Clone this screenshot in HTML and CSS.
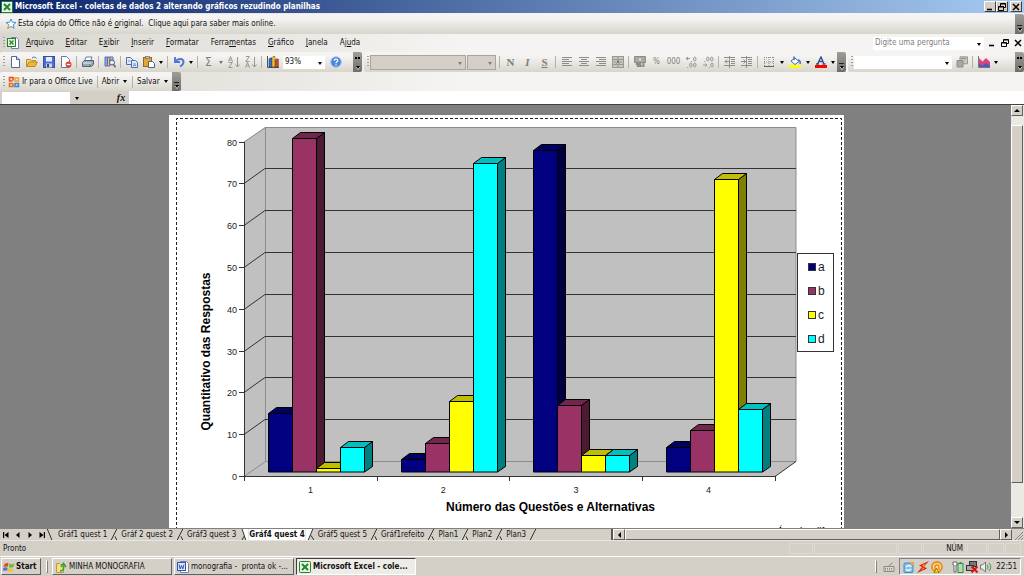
FILE: index.html
```
<!DOCTYPE html>
<html lang="pt-BR">
<head>
<meta charset="utf-8">
<title>Microsoft Excel - coletas de dados 2 alterando gráficos rezudindo planilhas</title>
<link rel="stylesheet" href="styles.css">
</head>
<body>
<svg class="defs" aria-hidden="true">
  <symbol id="excel" viewBox="0 0 12 12"><rect x=".5" y=".5" width="11" height="11" rx="1" fill="#e9f5e4" stroke="#2c7a2c"/><path d="M3 3l6 6M9 3L3 9" stroke="#1f8a2a" stroke-width="2"/></symbol>
  <symbol id="restore" viewBox="0 0 8 8"><path d="M2.500 3V.5h5v4H6M2.500 1h5" fill="none" stroke="#000"/><path d="M.5 3.500h5v4h-5zM.5 4h5" fill="none" stroke="#000"/></symbol>
  <symbol id="close" viewBox="0 0 8 8"><path d="M1 1l6 6M7 1L1 7" stroke="#000" stroke-width="1.500"/></symbol>
  <symbol id="min" viewBox="0 0 8 8"><path d="M1 6.500h5" stroke="#000" stroke-width="1.600"/></symbol>
</svg>

<header class="titlebar">
  <svg class="ic"><use href="#excel"/></svg>
  <h1>Microsoft Excel - coletas de dados 2 alterando gráficos rezudindo planilhas</h1>
  <div class="winbtns">
    <button aria-label="Minimizar"><svg class="ic8"><use href="#min"/></svg></button>
    <button aria-label="Restaurar"><svg class="ic8"><use href="#restore"/></svg></button>
    <button class="apart" aria-label="Fechar"><svg class="ic8"><use href="#close"/></svg></button>
  </div>
</header>

<div class="chrome">
  <div class="bar notice">
    <svg class="ic" viewBox="0 0 12 12"><path d="M6 1l1.400 3.300 3.600.2-2.800 2.200 1 3.600L6 8.400l-3.200 1.900 1-3.600L1 4.500l3.600-.2z" fill="#fff" stroke="#3b9bd8"/><path d="M6 8.400l-3.200 1.900 1-3.600" fill="none" stroke="#f0a030"/></svg>
    <span>Esta cópia do Office não é <u>o</u>riginal.&nbsp; Clique aqui para saber mais online.</span>
    <button class="cap" aria-label="Opções"></button>
  </div>

  <nav class="menubar">
    <i class="grip"></i>
    <svg class="ic menuicon" viewBox="0 0 12 12"><path d="M4.500.5h5l2 2v9h-7z" fill="#fff" stroke="#6b85b5"/><rect x=".5" y="1.500" width="8" height="8" fill="#e4f2e0" stroke="#2c7a2c"/><path d="M2.500 3.500l4 4M6.500 3.500l-4 4" stroke="#1f8a2a" stroke-width="1.300"/></svg>
    <button><u>A</u>rquivo</button><button><u>E</u>ditar</button><button>E<u>x</u>ibir</button><button><u>I</u>nserir</button><button><u>F</u>ormatar</button><button>Ferra<u>m</u>entas</button><button><u>G</u>ráfico</button><button><u>J</u>anela</button><button>Aj<u>u</u>da</button>
    <label class="ask"><input type="text" aria-label="Digite uma pergunta" placeholder="Digite uma pergunta"></label>
    <div class="docbtns">
      <button aria-label="Minimizar pasta"><svg class="ic8"><use href="#min"/></svg></button>
      <button aria-label="Restaurar pasta"><svg class="ic8"><use href="#restore"/></svg></button>
      <button aria-label="Fechar pasta"><svg class="ic8"><use href="#close"/></svg></button>
    </div>
  </nav>

  <div class="toolrow">
    <div class="bar tools">
      <i class="grip"></i>
      <button class="tb" aria-label="Novo"><svg class="ic" viewBox="0 0 12 12"><path d="M2.500.5h5l3 3v8h-8z" fill="#fff" stroke="#4a6a9c"/><path d="M7.500.5v3h3" fill="#cfdcf0" stroke="#4a6a9c"/></svg></button>
      <button class="tb" aria-label="Abrir arquivo"><svg class="ic" viewBox="0 0 12 12"><path d="M.5 10.500v-7h4l1 1h4v2" fill="#f7d678" stroke="#b98a20"/><path d="M.5 10.500l2.500-4.500h8.500l-2.500 4.500z" fill="#f2b83a" stroke="#b98a20"/><path d="M6 2c2-1.500 3.500-1 4.500.5" fill="none" stroke="#4a6a9c"/></svg></button>
      <button class="tb" aria-label="Salvar arquivo"><svg class="ic" viewBox="0 0 12 12"><rect x=".5" y=".5" width="11" height="11" fill="#4f6fd0" stroke="#3a4ea8"/><rect x="3" y="1" width="6" height="4.500" fill="#e8eefc"/><rect x="3" y="7.500" width="6" height="4" fill="#c9d4ee"/><rect x="4" y="8" width="2" height="3" fill="#33468c"/></svg></button>
      <button class="tb" aria-label="Permissão"><svg class="ic" viewBox="0 0 12 12"><path d="M1.500.5h5l3 3v8h-8z" fill="#fff" stroke="#6a7a9c"/><circle cx="8.500" cy="8.500" r="3" fill="#d8452c"/><path d="M6.700 8.500h3.600" stroke="#fff" stroke-width="1.300"/></svg></button>
      <i class="sep"></i>
      <button class="tb" aria-label="Imprimir"><svg class="ic" viewBox="0 0 12 12"><path d="M4 1h6L8.500 5h-6z" fill="#fff" stroke="#6a7a9c"/><path d="M.5 6.500l2-2h9v4l-2 2h-9z" fill="#9aa6bb" stroke="#56627a"/><path d="M1 7h8" stroke="#e8ecf4"/><path d="M7 9h2" stroke="#3fae3f" stroke-width="1.500"/></svg></button>
      <i class="sep"></i>
      <button class="tb" aria-label="Pesquisar"><svg class="ic" viewBox="0 0 12 12"><path d="M1 1h2.500v9H1z" fill="#8fa7dd" stroke="#5a70b0"/><path d="M3.500 1H6v9H3.500z" fill="#f0bd6a" stroke="#5a70b0"/><path d="M6 1h3v5H6z" fill="#a9bde8" stroke="#5a70b0"/><circle cx="8" cy="6.500" r="2.500" fill="#dff0ff" stroke="#556"/><path d="M9.600 8.600l2 2.800" stroke="#556" stroke-width="1.400"/></svg></button>
      <i class="sep"></i>
      <button class="tb" aria-label="Copiar"><svg class="ic" viewBox="0 0 12 12"><path d="M.5 1.500h4l2 2v5h-6z" fill="#dfe9fb" stroke="#4a6fb5"/><path d="M5.500 4.500h4l2 2v5h-6z" fill="#dfe9fb" stroke="#4a6fb5"/><path d="M7 8h3M7 9.500h3M2 5h2.500" stroke="#4a6fb5" stroke-width=".7"/></svg></button>
      <button class="tb" aria-label="Colar"><svg class="ic" viewBox="0 0 12 12"><rect x=".5" y="1.500" width="8" height="9" fill="#e3a534" stroke="#96681a"/><rect x="2.500" y=".5" width="4" height="2" fill="#c5c9d3" stroke="#6a6a6a" stroke-width=".7"/><path d="M5.500 5.500h4l2 2v4h-6z" fill="#fff" stroke="#55617a"/></svg></button><button class="dd" aria-label="Opções de colar"></button>
      <i class="sep"></i>
      <button class="tb" aria-label="Desfazer"><svg class="ic" viewBox="0 0 12 12"><path d="M2 1v5h5M2.500 5.500C5 1.800 10.500 2.500 10.500 6 10.500 8.500 9 9.500 7 10.500" fill="none" stroke="#4a7ad8" stroke-width="1.900"/></svg></button><button class="dd" aria-label="Lista desfazer"></button>
      <i class="sep"></i>
      <button class="tb off sum" aria-label="AutoSoma">Σ</button><button class="dd off" aria-label="Funções"></button>
      <button class="tb" aria-label="Crescente"><svg class="ic" viewBox="0 0 12 12" fill="none" stroke="#9a9893"><path d="M.5 5.500l2-5 2 5M1.300 4h2.500M.8 6.500h3.500l-3.500 5h3.700M9.500 1v9.500M7.500 8.500l2 2.500 2-2.500"/></svg></button>
      <button class="tb" aria-label="Decrescente"><svg class="ic" viewBox="0 0 12 12" fill="none" stroke="#9a9893"><path d="M.8.5h3.500l-3.500 5h3.700M.5 11.500l2-5 2 5M1.300 10h2.500M9.500 1v9.500M7.500 8.500l2 2.500 2-2.500"/></svg></button>
      <i class="sep"></i>
      <button class="tb" aria-label="Assistente de gráfico"><svg class="ic" viewBox="0 0 12 12"><path d="M.5 0v11.500H12" stroke="#555" fill="none"/><path d="M2 3l1-1h2v9H2z" fill="#3b6ed0" stroke="#234" stroke-width=".5"/><path d="M5 1.500l1-1h2V11H5z" fill="#f2c230" stroke="#543" stroke-width=".5"/><path d="M8.300 4l1-1h2v8h-3z" fill="#d8452c" stroke="#422" stroke-width=".5"/></svg></button>
      <span class="combo zoom"><select aria-label="Zoom"><option>93%</option></select></span>
      <button class="tb" aria-label="Ajuda do Excel"><svg class="ic" viewBox="0 0 12 12"><circle cx="6" cy="6" r="5.300" fill="#4a86dc" stroke="#a9c6ee"/><path d="M4.200 4.800C4.200 2.500 7.800 2.600 7.800 4.600 7.800 5.800 6 5.800 6 7.200M6 8.300v1.200" fill="none" stroke="#fff" stroke-width="1.300"/></svg></button>
      <button class="cap more" aria-label="Mais botões"></button>
    </div>

    <div class="bar tools">
      <i class="grip"></i>
      <span class="combo gray font"><select aria-label="Fonte" disabled><option></option></select></span>
      <span class="combo gray size"><select aria-label="Tamanho" disabled><option></option></select></span>
      <i class="sep"></i>
      <button class="tb off serif"><b>N</b></button>
      <button class="tb off serif"><b><i>I</i></b></button>
      <button class="tb off serif"><b><u>S</u></b></button>
      <i class="sep"></i>
      <button class="tb" aria-label="Esquerda"><svg class="ic" viewBox="0 0 12 12" stroke="#8f8d88"><path d="M1 1.500h10M1 3.500h7M1 5.500h10M1 7.500h7M1 9.500h10"/></svg></button>
      <button class="tb" aria-label="Centro"><svg class="ic" viewBox="0 0 12 12" stroke="#8f8d88"><path d="M1 1.500h10M3 3.500h6M1 5.500h10M3 7.500h6M1 9.500h10"/></svg></button>
      <button class="tb" aria-label="Direita"><svg class="ic" viewBox="0 0 12 12" stroke="#8f8d88"><path d="M1 1.500h10M4 3.500h7M1 5.500h10M4 7.500h7M1 9.500h10"/></svg></button>
      <button class="tb" aria-label="Mesclar"><svg class="ic" viewBox="0 0 12 12"><rect x=".5" y=".5" width="11" height="11" fill="#c9c6be" stroke="#9a9893"/><path d="M.5 3.500h11M.5 8.500h11M6 .5v3M6 8.500v3M1.500 6h2.500M8 6h2.500" stroke="#9a9893"/><path d="M4.800 7.500L6 4.500l1.200 3" fill="none" stroke="#66645f"/></svg></button>
      <i class="sep"></i>
      <button class="tb" aria-label="Moeda"><svg class="ic" viewBox="0 0 12 12"><path d="M.5.5h11v6H.5z" fill="#aaa8a2" stroke="#8f8d88"/><circle cx="6" cy="3.500" r="1.300" fill="#ddd"/><path d="M2 7.500h5v1H2zM3 9.500h5v1H3z" fill="#bbb" stroke="#8f8d88"/><path d="M9.500 7v4" stroke="#8f8d88" stroke-width="2"/></svg></button>
      <button class="tb off">%</button>
      <button class="tb off">000</button>
      <button class="tb" aria-label="Aumentar casas"><svg class="ic" viewBox="0 0 12 12" fill="none" stroke="#9a9893"><path d="M1 2.500h4M3 1L1 2.500 3 4M7 5l-.7 1M3 11l-.7 1"/><ellipse cx="9.800" cy="3" rx="1.200" ry="2"/><ellipse cx="5.800" cy="9" rx="1.200" ry="2"/><ellipse cx="9.800" cy="9" rx="1.200" ry="2"/></svg></button>
      <button class="tb" aria-label="Diminuir casas"><svg class="ic" viewBox="0 0 12 12" fill="none" stroke="#9a9893"><path d="M1 9h4M3.500 7.500L5 9 3.500 10.500M3 5l-.7 1M7.500 11l-.7 1"/><ellipse cx="5.800" cy="3" rx="1.200" ry="2"/><ellipse cx="9.800" cy="3" rx="1.200" ry="2"/><ellipse cx="10" cy="9" rx="1.200" ry="2"/></svg></button>
      <i class="sep"></i>
      <button class="tb" aria-label="Diminuir recuo"><svg class="ic" viewBox="0 0 12 12" fill="none" stroke="#8f8d88"><path d="M0 1.500h11M7 3.500h4M7 5.500h4M7 7.500h4M0 9.500h11M6 5.500H1M3 3.500l-2 2 2 2M5.500 0v12"/></svg></button>
      <button class="tb" aria-label="Aumentar recuo"><svg class="ic" viewBox="0 0 12 12" fill="none" stroke="#8f8d88"><path d="M0 1.500h11M7 3.500h4M7 5.500h4M7 7.500h4M0 9.500h11M0 5.500h5M2.500 3.500l2 2-2 2M5.500 0v12"/></svg></button>
      <i class="sep"></i>
      <button class="tb" aria-label="Bordas"><svg class="ic" viewBox="0 0 12 12" fill="none" stroke="#8f8d88"><path d="M1.500 1v9M6 1v9M10.500 1v9M1 1.500h10M1 6h10" stroke-dasharray="1 1"/><path d="M1 10.500h10" stroke="#66645f"/></svg></button><button class="dd wide" aria-label="Tipos de borda"></button>
      <button class="tb" aria-label="Cor de preenchimento"><svg class="ic" viewBox="0 0 12 12"><path d="M2 5l4-3 4 3.500L6 8.500z" fill="#fff" stroke="#4468a8"/><path d="M5 4V.5M9 4c2 0 2.500 2 2 4" fill="none" stroke="#3b6ed0" stroke-width="1.500"/><rect y="9" width="12" height="3" fill="#ff0"/></svg></button><button class="dd wide" aria-label="Cores de preenchimento"></button>
      <button class="tb" aria-label="Cor da fonte"><svg class="ic" viewBox="0 0 12 12"><path d="M2.500 8l3.500-7 3 7M4 5.500h4M1 8h3M7.500 8h3" fill="none" stroke="#33508c" stroke-width="1.400"/><rect y="9" width="12" height="3" fill="#f00"/></svg></button><button class="dd" aria-label="Cores da fonte"></button>
      <button class="cap" aria-label="Mais botões de formatação"></button>
    </div>

    <div class="bar tools">
      <i class="grip"></i>
      <span class="combo object"><select aria-label="Objetos do gráfico"><option></option></select></span>
      <button class="tb" aria-label="Formatar objeto"><svg class="ic" viewBox="0 0 12 12"><path d="M4 .8h7.500v7H4z" fill="#c9c6be" stroke="#9a9893"/><path d="M1 4.500h6v6.500H1z" fill="#aaa8a2" stroke="#8f8d88"/><path d="M5 2.500h5" stroke="#8f8d88"/></svg></button>
      <i class="sep"></i>
      <button class="tb" aria-label="Tipo de gráfico"><svg class="ic" viewBox="0 0 12 12"><path d="M.5 0v11.500H12" fill="none" stroke="#777"/><path d="M1 11V2l3.500 3.500L8 2l4 4v5z" fill="#e0407c"/><path d="M1 11V8l3.500 2L8 7l4 3v1z" fill="#3b5ed0"/></svg></button><button class="dd" aria-label="Tipos de gráfico"></button>
      <button class="cap more" aria-label="Mais botões de gráfico"></button>
    </div>
  </div>

  <div class="bar live">
    <i class="grip"></i>
    <button class="txt"><svg class="ic" viewBox="0 0 12 12" fill="none" stroke-width="1.600"><path d="M5 4.500V1.500H1.500V5H4.500" stroke="#e8501e"/><rect x="7" y="2" width="3.500" height="3" stroke="#f2a52a"/><path d="M5 7.500v3H1.500v-3H5" stroke="#e0702c"/><rect x="7" y="7.500" width="3.500" height="3" stroke="#3b8ed0"/></svg>Ir para o Office Live</button>
    <i class="sep"></i>
    <button class="txt">Abrir<i class="tri"></i></button>
    <i class="sep"></i>
    <button class="txt">Salvar<i class="tri"></i></button>
    <button class="cap" aria-label="Mais opções"></button>
  </div>

  <div class="formula">
    <input class="name" type="text" aria-label="Caixa de nome">
    <button class="dd" aria-label="Nomes"></button>
    <button class="fx">fx</button>
    <input class="expr" type="text" aria-label="Barra de fórmulas">
  </div>
</div>

<main class="work">
  <div class="canvas">
    <div class="sheet">
      <svg id="chart" class="chart" viewBox="169 115 675 430" role="img" aria-label="Gráfico de colunas das respostas"></svg>
    </div>
  </div>
  <div class="vscroll">
    <button class="sb" aria-label="Acima"><i class="up"></i></button>
    <div class="vtrack"><div class="vthumb"></div></div>
    <button class="sb" aria-label="Abaixo"><i class="down"></i></button>
  </div>
</main>

<div class="tabrow">
  <div class="tabnav">
    <button aria-label="Primeira"><svg class="ic8" viewBox="0 0 8 8"><path d="M1 1h1.200v6H1zM6.500 1v6L2.500 4z"/></svg></button>
    <button aria-label="Anterior"><svg class="ic8" viewBox="0 0 8 8"><path d="M5.500 1v6L2 4z"/></svg></button>
    <button aria-label="Próxima"><svg class="ic8" viewBox="0 0 8 8"><path d="M2.500 1v6L6 4z"/></svg></button>
    <button aria-label="Última"><svg class="ic8" viewBox="0 0 8 8"><path d="M5.800 1H7v6H5.800zM1.500 1v6l4-3z"/></svg></button>
  </div>
  <svg class="cut" viewBox="0 0 12 12"><path d="M2 0l5 12"/></svg>
  <button class="tab">Gráf1 quest 1</button>
  <svg class="cut" viewBox="0 0 12 12"><path d="M3 12L9 0M7 8l2 4"/></svg>
  <button class="tab">Gráf 2 quest 2</button>
  <svg class="cut" viewBox="0 0 12 12"><path d="M3 12L9 0M7 8l2 4"/></svg>
  <button class="tab">Gráf3 quest 3</button>
  <svg class="cut" viewBox="0 0 12 12"><path class="fill" d="M5 0h7v12H9z"/><path d="M5 0l4 12M5 12l2-4"/></svg>
  <button class="tab active">Gráf4 quest 4</button>
  <svg class="cut" viewBox="0 0 12 12"><path class="fill" d="M0 0h8L3 12H0z"/><path d="M3 12L8 0M6 7l3 5"/></svg>
  <button class="tab">Gráf5 quest 5</button>
  <svg class="cut" viewBox="0 0 12 12"><path d="M3 12L9 0M7 8l2 4"/></svg>
  <button class="tab">Gráf1refeito</button>
  <svg class="cut" viewBox="0 0 12 12"><path d="M3 12L9 0M7 8l2 4"/></svg>
  <button class="tab">Plan1</button>
  <svg class="cut" viewBox="0 0 12 12"><path d="M3 12L9 0M7 8l2 4"/></svg>
  <button class="tab">Plan2</button>
  <svg class="cut" viewBox="0 0 12 12"><path d="M3 12L9 0M7 8l2 4"/></svg>
  <button class="tab">Plan3</button>
  <svg class="cut" viewBox="0 0 12 12"><path d="M3 12L9 0"/></svg>
  <div class="hscroll">
    <button class="sb" aria-label="Esquerda"><i class="left"></i></button>
    <div class="hthumb"></div>
    <button class="sb" aria-label="Direita"><i class="right"></i></button>
  </div>
  <svg class="size-grip" viewBox="0 0 12 12"><path d="M3 11l8-8M6 11l5-5M9 11l2-2" stroke="#8c8a84"/></svg>
</div>

<footer class="status">
  <span class="ready">Pronto</span>
  <span class="cell w25"></span><span class="cell w83"></span><span class="cell w25"></span><span class="cell num">NÚM</span><span class="cell w20"></span><span class="cell w16"></span><span class="cell w16"></span>
</footer>

<div class="taskbar">
  <button class="task start"><svg class="ic" viewBox="0 0 12 12"><path d="M1 4c1-2 3-2.500 4.500-1.500L4.700 6C3.500 5.200 2 5.200.5 6z" fill="#e8501e"/><path d="M6.500 2.500C8 3.500 10 3.500 11.500 2L10.500 6C9 7 7 7 5.700 6z" fill="#6fb83f"/><path d="M.3 7C2 6 3.500 6 4.600 7L4 10C2.500 9.300 1 9.500 0 10z" fill="#3b7ed8"/><path d="M5.500 7c1.500 1 3 1 4.800.2L9.500 10.500C8 11.500 6 11 4.700 10.300z" fill="#f2c230"/></svg>Start</button>
  <i class="tgrip"></i>
  <button class="task"><svg class="ic" viewBox="0 0 12 12"><path d="M1.500 11.500v-9h3l1 1h3v8z" fill="#f5dd80" stroke="#c09a30"/><path d="M5 10c3 0 4-2 3.500-5M6 6l2.500-3.500L11 6" fill="none" stroke="#37a137" stroke-width="1.600"/></svg><span>MINHA MONOGRAFIA</span></button>
  <button class="task"><svg class="ic" viewBox="0 0 12 12"><path d="M3.500.5h6l2 2v9h-8z" fill="#fff" stroke="#6b85b5"/><rect x=".5" y="1.500" width="8" height="8" fill="#dce6f8" stroke="#2f55b0"/><path d="M2 3.500L3.200 8 4.500 4.500 5.800 8 7 3.500" fill="none" stroke="#2f55b0"/></svg><span>monografia -&nbsp; pronta ok -...</span></button>
  <button class="task on"><svg class="ic"><use href="#excel"/></svg><span>Microsoft Excel - cole...</span></button>
  <i class="tgrip right-edge"></i>
  <svg class="ic kbd" viewBox="0 0 12 12"><path d="M1 5.500h10v5H1z" fill="#d8d5cd" stroke="#8c8a84"/><path d="M2 7.500h8M2 9h8" stroke="#8c8a84" stroke-dasharray="1 1"/><path d="M6 5.500c0-3 3-1 3-4" fill="none" stroke="#8c8a84"/></svg>
  <div class="tray">
    <svg class="ic" viewBox="0 0 12 12"><rect x="1" y="2" width="9" height="9.500" rx="1" fill="#7fc0ee" stroke="#3b8ed0"/><path d="M3 6c2-2 4-2 5 0M8 8c-2 2-4 2-5 0" fill="none" stroke="#fff" stroke-width="1.300"/><path d="M7 1h4v3H8z" fill="#f2a52a"/></svg>
    <svg class="ic" viewBox="0 0 12 12"><path d="M12 0L2 4.500 5 6 0 12 10 7.500 7 5.500z" fill="#e02010"/><path d="M9 2.500L5 4.500 7 6 3.500 9.500 7 7.500 6 5.500z" fill="#f8c820"/></svg>
    <svg class="ic" viewBox="0 0 12 12"><circle cx="6" cy="6" r="5" fill="#fbe0a8" stroke="#ee8a1a" stroke-width="1.800"/><path d="M4 9V6c0-3 4-3 4 0v3" fill="none" stroke="#ee8a1a" stroke-width="1.500"/><path d="M3 12l2.500-5L8 12z" fill="#ffd800" stroke="#554400" stroke-width=".6"/></svg>
    <svg class="ic gap" viewBox="0 0 12 12"><path d="M1 1h4v3H4v7H2V4H1z" fill="#fff" stroke="#666"/><rect x="6" y="2.500" width="5" height="9" fill="#a9e2b0" stroke="#3c8a48"/><rect x="7.500" y="1" width="2" height="1.500" fill="#3c8a48"/></svg>
    <svg class="ic" viewBox="0 0 12 12"><rect x="3.500" y=".5" width="7" height="5" fill="#777" stroke="#333"/><rect x=".5" y="4.500" width="7" height="5" fill="#aaa" stroke="#333"/><path d="M5.500 5.500l6 6M11.500 5.500l-6 6" stroke="#e01010" stroke-width="2"/></svg>
    <svg class="ic" viewBox="0 0 12 12"><path d="M.5 4h2l3-3v10l-3-3h-2z" fill="#eee" stroke="#777"/><path d="M7 3.500c1.300 1.500 1.300 3.500 0 5M9 2c2.300 2.500 2.300 5.500 0 8" fill="none" stroke="#3c9a58"/></svg>
    <time>22:51</time>
  </div>
</div>
<script src="chart.js"></script>
</body>
</html>
```
FILE: styles.css
```
* { box-sizing: border-box; }
html, body { height: 100%; margin: 0; }
body {
  display: flex;
  flex-direction: column;
  overflow: hidden;
  background: #d4d0c8;
  color: #111;
  font: 8px/12px "DejaVu Sans Condensed", "DejaVu Sans", sans-serif;
}
button, input, select {
  margin: 0;
  padding: 0;
  border: 0;
  border-radius: 0;
  background: none;
  color: inherit;
  font: inherit;
}
button { white-space: nowrap; }
.defs { display: none; }
.ic { display: block; flex: none; width: 12px; height: 12px; }
.ic8 { display: block; flex: none; width: 8px; height: 8px; }

.titlebar {
  display: flex;
  flex: none;
  align-items: center;
  gap: 2px;
  height: 13px;
  padding: 0 2px 0 1px;
  background: linear-gradient(90deg, #0a246a, #a6caf0);
  color: #fff;
}
.titlebar h1 { flex: 1; margin: 0; font-size: 8px; line-height: 13px; white-space: nowrap; }
.winbtns { display: flex; }
.winbtns button {
  display: grid;
  place-items: center;
  width: 12px;
  height: 11px;
  background: #d4d0c8;
  border: 1px solid;
  border-color: #fff #404040 #404040 #fff;
}
.winbtns .apart { margin-left: 2px; }

.chrome { flex: none; background: linear-gradient(90deg, #d9d6cf, #f5f4f2 45%); }
.bar {
  display: flex;
  align-items: center;
  height: 19px;
  background: linear-gradient(#f5f4f2 20%, #d8d5cc);
  border-radius: 2px;
}
.notice { margin-top: 1px; gap: 1px; padding-left: 5px; height: 20px; }
.grip {
  flex: none;
  width: 2px;
  height: 12px;
  margin: 0 2px 0 3px;
  background: repeating-linear-gradient(#a19e95 0 1px, transparent 1px 3px);
}
.cap {
  position: relative;
  align-self: stretch;
  width: 9px;
  margin-left: auto;
  border-radius: 0 2px 2px 0;
  background: linear-gradient(#a09e99, #6f6d69);
}
.cap::after, .dd::after, .tri {
  content: "";
  display: block;
  width: 0;
  margin: 0 auto;
  border: 2px solid transparent;
  border-top: 3px solid #000;
  border-bottom: 0;
}
.cap::after {
  position: absolute;
  right: 2px;
  bottom: 3px;
  filter: drop-shadow(0 1px 0 #fff);
}
.cap::before {
  content: "";
  position: absolute;
  right: 2px;
  bottom: 8px;
  width: 5px;
  height: 1px;
  background: #222;
}
.cap.more::before {
  bottom: 13px;
  height: 2px;
  background: repeating-linear-gradient(90deg, #000 0 2px, #888 2px 3px);
}

.menubar { display: flex; align-items: center; height: 18px; }
.menubar > button { margin-right: 12px; }
.menuicon { margin-right: 7px; }
.ask {
  position: relative;
  display: flex;
  width: 111px;
  height: 13px;
  margin-left: auto;
  background: #fff;
}
.ask input { width: 90px; padding-left: 2px; }
.ask input::placeholder { color: #808080; opacity: 1; }
.ask::after, .combo::after {
  content: "";
  position: absolute;
  top: 50%;
  right: 3px;
  border: 2px solid transparent;
  border-top: 3px solid #000;
  border-bottom: 0;
}
.docbtns { display: flex; gap: 5px; padding: 0 2px 0 4px; }

.toolrow { display: grid; grid-template-columns: 362fr 482fr 176fr; gap: 2px; }
.tools { min-width: 0; height: 20px; }
.tools > .grip { margin: 0 1px 0 3px; }
.tb {
  display: grid;
  flex: none;
  place-items: center;
  width: 17px;
  height: 16px;
}
.off { color: #807e79; }
.sum { font-size: 12px; }
.serif { font: 11px/12px "Liberation Serif", serif; }
.dd { flex: none; width: 8px; height: 12px; }
.dd.wide { width: 9px; }
.dd.off { opacity: .5; }
.dd::after { margin-top: 1px; }
.sep { flex: none; width: 1px; height: 12px; margin: 0 2px; background: #b5b2a9; }
.combo { position: relative; flex: none; height: 13px; background: #fff; }
.combo select { appearance: none; display: block; width: 100%; height: 100%; padding-left: 2px; }
.combo.gray { height: 15px; margin-right: 1px; background: #d4d0c8; border: 1px solid #a8a59e; }
.combo.gray::after { opacity: .4; }
.zoom { width: 42px; margin: 0 2px; }
.font { width: 96px; }
.size { width: 29px; }
.object { width: 98px; margin-right: 1px; }

.live { width: max-content; }
.live .txt { display: flex; align-items: center; gap: 3px; margin: 0 2px; }
.live .txt:first-of-type { gap: 2px; margin-left: 1px; }
.live .cap { margin-left: 1px; }
.live .tri { margin: 0 1px; }

.formula { display: flex; align-items: center; height: 13px; background: #d4d0c8; }
.name { width: 68px; height: 12px; margin-left: 2px; background: #fff; }
.formula .dd { margin: 0 0 0 3px; }
.fx { width: 12px; margin: 0 2px 0 34px; font: italic bold 10px/12px "Liberation Serif", serif; }
.expr { flex: 1; height: 13px; background: #fff; }

.work { display: flex; flex: 1; min-height: 0; border-top: 1px solid #404040; }
.canvas {
  display: flex;
  flex: 1;
  justify-content: center;
  min-width: 0;
  padding: 10px 0 0 2px;
  overflow: hidden;
  background: #808080;
}
.sheet { flex: none; align-self: flex-start; background: #fff; }
.chart { display: block; width: 675px; height: 430px; font-family: "Liberation Sans", Arial, sans-serif; }
.tick { font-size: 9px; }
.title { font-size: 12px; font-weight: bold; }
.key { font-size: 12px; }
.note { font-size: 10px; }

.vscroll { display: flex; flex-direction: column; width: 13px; background: #ebe9e4; }
.sb, .vthumb, .hthumb {
  flex: none;
  background: #d4d0c8;
  border: 1px solid;
  border-color: #fff #606060 #606060 #fff;
}
.sb { display: grid; place-items: center; width: 12px; height: 11px; }
.vtrack { display: flex; flex: 1; flex-direction: column; padding: 9px 0 34px; }
.vthumb { flex: 1; width: 12px; }
.up, .down, .left, .right { border: 3px solid transparent; }
.up { border-top: 0; border-bottom-color: #000; }
.down { border-bottom: 0; border-top-color: #000; }
.left { border-left: 0; border-right-color: #000; }
.right { border-right: 0; border-left-color: #000; }

.tabrow { display: flex; flex: none; height: 12px; border-top: 1px solid #808080; }
.tabnav { display: flex; width: 45px; padding-left: 2px; gap: 4px; align-items: center; }
.cut { flex: none; width: 12px; height: 11px; fill: none; stroke: #222; }
.cut .fill { fill: #fff; stroke: none; }
.tab { padding: 0 1px; line-height: 11px; }
.tab.active { background: #fff; font-weight: bold; padding: 0; }
.hscroll {
  display: flex;
  width: 401px;
  margin-left: auto;
  border-left: 2px solid #555;
}
.hthumb { flex: 1; }
.size-grip { width: 12px; height: 12px; }

.status {
  display: flex;
  flex: none;
  align-items: center;
  height: 16px;
  padding: 0 3px;
  gap: 1px;
  border-top: 1px solid #e8e6e0;
}
.ready { flex: 1; }
.cell { height: 11px; line-height: 10px; text-align: right; border: 1px solid #dddad3; }
.w16 { width: 16px; }
.w20 { width: 20px; }
.w25 { width: 24px; }
.w83 { width: 83px; }
.num { width: 43px; padding-right: 2px; }

.taskbar {
  display: flex;
  flex: none;
  align-items: center;
  height: 20px;
  padding: 0 3px 0 1px;
  gap: 2px;
  border-top: 1px solid #fff;
}
.task {
  display: flex;
  align-items: center;
  gap: 2px;
  width: 120px;
  height: 17px;
  padding: 0 2px;
  border: 1px solid;
  border-color: #fff #606060 #606060 #fff;
}
.task.start { width: 40px; gap: 1px; padding: 0 1px; font-weight: bold; }
.task.on { background: #eeece7; border-color: #404040 #fff #fff #404040; font-weight: bold; }
.tgrip { width: 2px; height: 13px; margin: 0 2px 0 3px; border: 1px solid; border-color: #fff #808080 #808080 #fff; }
.right-edge { margin: 0 4px 0 auto; }
.kbd { margin-right: 2px; }
.tray {
  display: flex;
  align-items: center;
  gap: 2px;
  height: 17px;
  padding: 0 3px;
  border: 1px solid;
  border-color: #808080 #fff #fff #808080;
}
.tray .gap { margin-left: 7px; }
.tray time { margin-left: 2px; }
```
FILE: chart.js
```
const NS = 'http://www.w3.org/2000/svg';
const chart = document.getElementById('chart');

const add = (tag, attrs, text) => {
  const el = document.createElementNS(NS, tag);
  for (const k in attrs) el.setAttribute(k, attrs[k]);
  if (text) el.textContent = text;
  chart.appendChild(el);
};

const series = [
  { name: 'a', front: '#000080', top: '#000060', side: '#000040' },
  { name: 'b', front: '#993366', top: '#73264d', side: '#4d1a33' },
  { name: 'c', front: '#ffff00', top: '#bfbf00', side: '#808000' },
  { name: 'd', front: '#00ffff', top: '#00bfbf', side: '#008080' }
];
const data = [[14, 80, 1, 6], [3, 7, 17, 74], [77, 16, 4, 4], [6, 10, 70, 15]];
const unit = 4.18;
const left = 244, right = 775, floor = 476.5, wall = 461.5;

// page margin, walls and floor
add('path', { d: 'M176.5 545V118.5H841.5V545', fill: 'none', stroke: '#222', 'stroke-dasharray': '3 2' });
add('path', { d: `M${left} 142L265 127H796V${wall}L${right} ${floor}H${left}Z`, fill: '#c0c0c0' });
add('path', { d: `M${left} 142L265.5 127.5H796V${wall}M265.5 127V${wall}M${left} ${floor}L265.5 ${wall}H796`, fill: 'none', stroke: '#8c8c8c' });
add('path', { d: `M${left + .5} 142V481M${left} ${floor}H${right}L796 ${wall}`, fill: 'none', stroke: '#333' });

// scale
for (let v = 0; v <= 80; v += 10) {
  const y = Math.round(476 - v * unit) + .5;
  const back = Math.round(461 - v * unit) + .5;
  add('path', { d: `M239 ${y}H244`, stroke: '#333' });
  if (v > 0 && v < 80) add('path', { d: `M244 ${y}L265 ${back}H796`, fill: 'none', stroke: '#333' });
  add('text', { x: 237, y: y + 3, 'text-anchor': 'end', class: 'tick', fill: '#222' }, String(v));
}

// columns
data.forEach((group, g) => {
  const tick = Math.round(left + (g + 1) * 132.7) + .5;
  add('path', { d: `M${tick} 476V481`, stroke: '#333' });
  add('text', { x: left + 66.5 + g * 132.7, y: 493, 'text-anchor': 'middle', class: 'tick', fill: '#222' }, String(g + 1));
  group.forEach((v, i) => {
    const x = Math.round(268 + g * 132.7) + i * 24 + .5;
    const y = Math.round(472 - v * unit) + .5;
    const s = series[i];
    const line = { stroke: '#000', 'stroke-linejoin': 'round' };
    add('path', { d: `M${x + 24} ${y}l8 -6V466.5L${x + 24} 472Z`, fill: s.side, ...line });
    add('path', { d: `M${x} ${y}l8 -6h24l-8 6Z`, fill: s.top, ...line });
    add('path', { d: `M${x} ${y}h24V472H${x}Z`, fill: s.front, ...line });
  });
});

// titles
add('text', { x: 550.5, y: 511, 'text-anchor': 'middle', class: 'title' }, 'Número das Questões e Alternativas');
add('text', { transform: 'translate(210 351.5) rotate(-90)', 'text-anchor': 'middle', class: 'title' }, 'Quantitativo das Respostas');

// legend
add('rect', { x: 797.5, y: 253.5, width: 36, height: 98, fill: '#fff', stroke: '#333' });
series.forEach((s, i) => {
  add('rect', { x: 808.5, y: 263.5 + i * 24, width: 7, height: 7, fill: s.front, stroke: '#333' });
  add('text', { x: 818, y: 271 + i * 24, class: 'key', fill: '#222' }, s.name);
});

// caption under the plot, cut by the window edge
add('text', { x: 777, y: 535, class: 'note' }, 'Á');
add('text', { x: 800, y: 535, class: 'note' }, 'l');
add('text', { x: 817, y: 535, class: 'note' }, 'lif');
```
